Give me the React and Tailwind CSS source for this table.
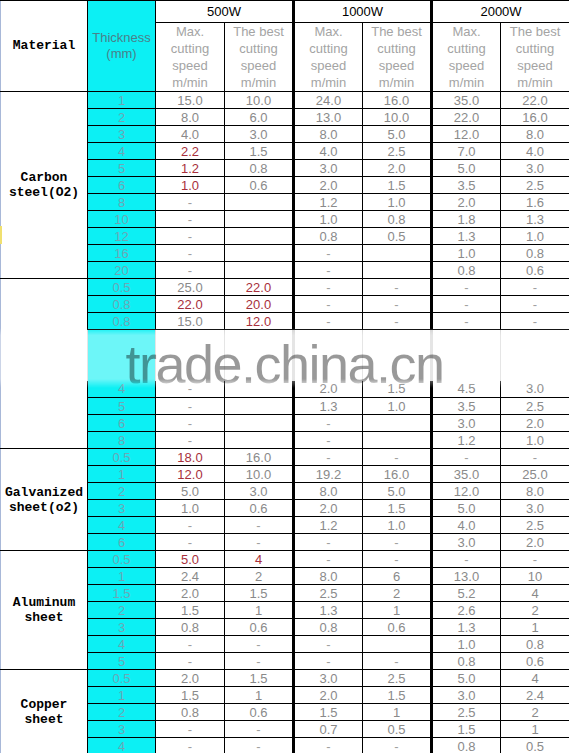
const groups = [
  {
    name: ["Carbon", "steel(O2)"],
    rows: [
      ["1", "15.0", "10.0", "24.0", "16.0", "35.0", "22.0"],
      ["2", "8.0", "6.0", "13.0", "10.0", "22.0", "16.0"],
      ["3", "4.0", "3.0", "8.0", "5.0", "12.0", "8.0"],
      ["4", "*2.2", "1.5", "4.0", "2.5", "7.0", "4.0"],
      ["5", "*1.2", "0.8", "3.0", "2.0", "5.0", "3.0"],
      ["6", "*1.0", "0.6", "2.0", "1.5", "3.5", "2.5"],
      ["8", "-", "", "1.2", "1.0", "2.0", "1.6"],
      ["10", "-", "", "1.0", "0.8", "1.8", "1.3"],
      ["12", "-", "", "0.8", "0.5", "1.3", "1.0"],
      ["16", "-", "", "-", "", "1.0", "0.8"],
      ["20", "-", "", "-", "", "0.8", "0.6"],
    ],
  },
  {
    // label and three rows sit under the watermark band
    name: [],
    rows: [
      ["0.5", "25.0", "*22.0", "-", "-", "-", "-"],
      ["0.8", "*22.0", "*20.0", "-", "-", "-", "-"],
      ["0.8", "15.0", "*12.0", "-", "-", "-", "-"],
      null,
      null,
      null,
      ["4", "-", "", "2.0", "1.5", "4.5", "3.0"],
      ["5", "-", "", "1.3", "1.0", "3.5", "2.5"],
      ["6", "-", "", "-", "", "3.0", "2.0"],
      ["8", "-", "", "-", "", "1.2", "1.0"],
    ],
  },
  {
    name: ["Galvanized", "sheet(o2)"],
    rows: [
      ["0.5", "*18.0", "16.0", "-", "-", "-", "-"],
      ["1", "*12.0", "10.0", "19.2", "16.0", "35.0", "25.0"],
      ["2", "5.0", "3.0", "8.0", "5.0", "12.0", "8.0"],
      ["3", "1.0", "0.6", "2.0", "1.5", "5.0", "3.0"],
      ["4", "-", "-", "1.2", "1.0", "4.0", "2.5"],
      ["6", "-", "-", "-", "-", "3.0", "2.0"],
    ],
  },
  {
    name: ["Aluminum", "sheet"],
    rows: [
      ["0.5", "*5.0", "*4", "-", "-", "-", "-"],
      ["1", "2.4", "2", "8.0", "6", "13.0", "10"],
      ["1.5", "2.0", "1.5", "2.5", "2", "5.2", "4"],
      ["2", "1.5", "1", "1.3", "1", "2.6", "2"],
      ["3", "0.8", "0.6", "0.8", "0.6", "1.3", "1"],
      ["4", "-", "-", "-", "", "1.0", "0.8"],
      ["5", "-", "-", "-", "-", "0.8", "0.6"],
    ],
  },
  {
    name: ["Copper", "sheet"],
    rows: [
      ["0.5", "2.0", "1.5", "3.0", "2.5", "5.0", "4"],
      ["1", "1.5", "1", "2.0", "1.5", "3.0", "2.4"],
      ["2", "0.8", "0.6", "1.5", "1", "2.5", "2"],
      ["3", "-", "-", "0.7", "0.5", "1.5", "1"],
      ["4", "-", "-", "-", "-", "0.8", "0.5"],
    ],
  },
];

const watts = ["500W", "1000W", "2000W"];
const blank = ["", "", "", "", "", "", ""];

function SpeedCell({ value, thick, edge }) {
  const red = value.startsWith("*");
  const text = red ? value.slice(1) : value;
  return (
    <td
      className={
        "border border-black p-0 text-center align-middle leading-none " +
        edge +
        (thick ? "border-l-[3px] " : "") +
        (red ? "text-[#a8303c]" : text === "-" ? "text-[#a0a0a0]" : "text-[#8a8a8a]")
      }
    >
      {text}
    </td>
  );
}

function GroupRows({ group }) {
  return group.rows.map((r, i) => {
    const hidden = r === null;
    const afterHidden = i > 0 && group.rows[i - 1] === null;
    const row = r || blank;
    // rows under the band: no row lines, washed-out column lines
    const edge =
      (hidden ? "border-y-0 border-x-[#d4d4d4] " : "") + (afterHidden ? "border-t-0 " : "");
    return (
      <tr key={i} className="h-[17px]">
        {i === 0 && (
          <td
            rowSpan={group.rows.length}
            className="border-t border-b border-black border-l border-l-[#a8b8d8] p-0 text-center align-middle font-['Liberation_Mono',monospace] text-[13px] font-bold leading-[15px] text-black"
          >
            {group.name.map((line) => (
              <div key={line}>{line}</div>
            ))}
          </td>
        )}
        <td
          className={
            "border border-black bg-[#0cf0f4] p-0 text-center align-middle leading-none text-[#6aa8b6] " +
            edge
          }
        >
          {row[0]}
        </td>
        {row.slice(1).map((v, j) => (
          <SpeedCell key={j} value={v} thick={j === 2 || j === 4} edge={edge} />
        ))}
      </tr>
    );
  });
}

export default function App() {
  return (
    <div className="relative h-[753px] w-[569px] overflow-hidden bg-white font-['Liberation_Sans',Arial,sans-serif] text-[13px]">
      <table className="w-[569px] table-fixed border-collapse">
        <colgroup>
          <col className="w-[87px]" />
          <col className="w-[68px]" />
          <col className="w-[69px]" />
          <col className="w-[69px]" />
          <col className="w-[69px]" />
          <col className="w-[69px]" />
          <col className="w-[69px]" />
          <col className="w-[69px]" />
        </colgroup>
        <thead>
          <tr className="h-[22px]">
            <th
              rowSpan={2}
              className="border border-black border-l-[#a8b8d8] p-0 text-center align-middle font-['Liberation_Mono',monospace] text-[13px] font-bold text-black"
            >
              Material
            </th>
            <th
              rowSpan={2}
              className="border border-black bg-[#0cf0f4] p-0 text-center align-middle text-[13px] font-normal leading-4 text-[#4a8089]"
            >
              <div>Thickness</div>
              <div>(mm)</div>
            </th>
            {watts.map((w, i) => (
              <th
                key={w}
                colSpan={2}
                className={
                  "border border-black p-0 text-center align-middle text-[13px] font-normal text-black " +
                  (i > 0 ? "border-l-[3px]" : "")
                }
              >
                {w}
              </th>
            ))}
          </tr>
          <tr className="h-[68px]">
            {[0, 1, 2, 3, 4, 5].map((i) => (
              <th
                key={i}
                className={
                  "border border-black p-0 text-center align-middle text-[13px] font-normal leading-[17px] text-[#a4a4a4] " +
                  (i === 2 || i === 4 ? "border-l-[3px]" : "")
                }
              >
                <div>{i % 2 === 0 ? "Max." : "The best"}</div>
                <div>cutting</div>
                <div>speed</div>
                <div>m/min</div>
              </th>
            ))}
          </tr>
        </thead>
        <tbody>
          {groups.map((g, i) => (
            <GroupRows key={i} group={g} />
          ))}
        </tbody>
      </table>

      {/* excel selection mark on the left edge */}
      <div className="absolute left-0 top-[226px] h-[18px] w-[2px] bg-[#f0e070]" />

      {/* watermark band */}
      <div className="absolute left-0 top-[328px] flex h-[60px] w-[569px] justify-center bg-white/40 [mask-image:linear-gradient(to_bottom,transparent,black_12%,black_85%,transparent)]">
        <span className="pt-[9px] text-[54px] leading-none tracking-[-1.5px] text-black/40">
          trade.china.cn
        </span>
      </div>
    </div>
  );
}
